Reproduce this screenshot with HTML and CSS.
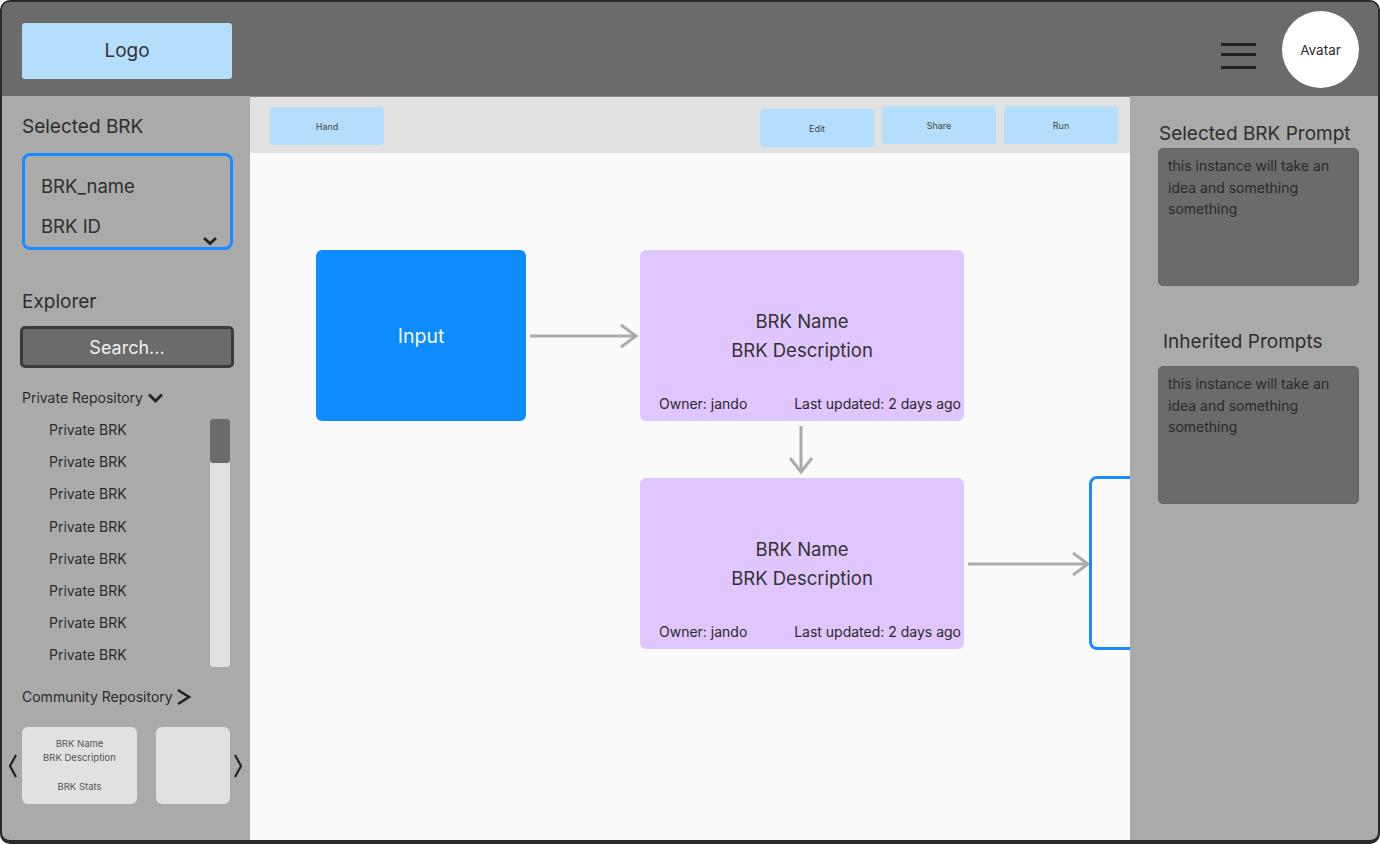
FILE: index.html
```html
<!DOCTYPE html>
<html>
<head>
<meta charset="utf-8">
<link rel="stylesheet" href="styles.css">
</head>
<body>
<div class="frame">
  <header class="header">
    <div class="logo">Logo</div>
    <div class="header-right">
      <svg class="hamburger" width="36" height="32" viewBox="0 0 36 32">
        <rect x="0" y="3" width="35" height="3" fill="#222"/>
        <rect x="0" y="13" width="35" height="3" fill="#222"/>
        <rect x="0" y="26" width="35" height="3" fill="#222"/>
      </svg>
      <div class="avatar">Avatar</div>
    </div>
  </header>
  <div class="main">
    <aside class="sidebar">
      <h2 class="side-title">Selected BRK</h2>
      <div class="select-box">
        <div class="select-line">BRK_name</div>
        <div class="select-line">BRK ID</div>
        <svg class="select-chevron" width="16" height="10" viewBox="0 0 16 10"><path d="M2 2 L8 7.5 L14 2" fill="none" stroke="#222" stroke-width="2.8"/></svg>
      </div>
      <h2 class="side-title explorer">Explorer</h2>
      <div class="search">Search...</div>
      <div class="repo-head">Private Repository
        <svg width="17" height="12" viewBox="0 0 17 12"><path d="M2 2.5 L8.5 9 L15 2.5" fill="none" stroke="#222" stroke-width="2.8"/></svg>
      </div>
      <div class="repo-list">
        <ul class="items">
          <li>Private BRK</li>
          <li>Private BRK</li>
          <li>Private BRK</li>
          <li>Private BRK</li>
          <li>Private BRK</li>
          <li>Private BRK</li>
          <li>Private BRK</li>
          <li>Private BRK</li>
        </ul>
        <div class="scrollbar"><div class="thumb"></div></div>
      </div>
      <div class="repo-head community">Community Repository
        <svg width="16" height="18" viewBox="0 0 16 18"><path d="M2 2 L13 9 L2 16" fill="none" stroke="#222" stroke-width="2.6"/></svg>
      </div>
      <div class="carousel">
        <svg class="car-arrow" width="12" height="26" viewBox="0 0 12 26"><path d="M9 2 L3 13 L9 24" fill="none" stroke="#222" stroke-width="2.2"/></svg>
        <div class="card">
          <div>BRK Name</div>
          <div>BRK Description</div>
          <div class="stats">BRK Stats</div>
        </div>
        <div class="card small"></div>
        <svg class="car-arrow" width="12" height="26" viewBox="0 0 12 26"><path d="M3 2 L9 13 L3 24" fill="none" stroke="#222" stroke-width="2.2"/></svg>
      </div>
    </aside>
    <section class="center">
      <div class="toolbar">
        <button class="tool hand">Hand</button>
        <div class="tool-group">
          <button class="tool edit">Edit</button>
          <button class="tool">Share</button>
          <button class="tool">Run</button>
        </div>
      </div>
      <div class="canvas">
        <svg class="wires" width="880" height="690" viewBox="0 0 880 690">
          <g fill="none" stroke="#ababab" stroke-width="3">
            <path d="M280 183 H385"/>
            <path d="M371 172 L386 183 L371 194"/>
            <path d="M551 273 V318"/>
            <path d="M540 305 L551 319 L562 305"/>
            <path d="M718 411 H837"/>
            <path d="M823 400 L838 411 L823 422"/>
          </g>
        </svg>
        <div class="node input-node">Input</div>
        <div class="node brk n1">
          <div class="brk-title">BRK Name<br>BRK Description</div>
          <div class="brk-foot"><span>Owner: jando</span><span>Last updated: 2 days ago</span></div>
        </div>
        <div class="node brk n2">
          <div class="brk-title">BRK Name<br>BRK Description</div>
          <div class="brk-foot"><span>Owner: jando</span><span>Last updated: 2 days ago</span></div>
        </div>
        <div class="node output-node"></div>
      </div>
    </section>
    <aside class="rightpanel">
      <h2 class="r-title">Selected BRK Prompt</h2>
      <div class="prompt">this instance will take an idea and something something</div>
      <h2 class="r-title inherited">Inherited Prompts</h2>
      <div class="prompt">this instance will take an idea and something something</div>
    </aside>
  </div>
</div>
</body>
</html>
```

FILE: styles.css
```css
* { box-sizing: border-box; }
html, body { margin: 0; padding: 0; }
body {
  width: 1380px;
  height: 844px;
  background: #ffffff;
  font-family: Inter, "Liberation Sans", sans-serif;
  color: #2e2e2e;
  overflow: hidden;
}
.frame {
  width: 1380px;
  height: 844px;
  border: 2px solid #2a2a2a;
  border-bottom-width: 4px;
  border-radius: 10px;
  overflow: hidden;
  display: flex;
  flex-direction: column;
  background: #6b6b6b;
}
.header {
  height: 94px;
  flex: none;
  background: #6b6b6b;
  display: flex;
  align-items: center;
  justify-content: space-between;
  padding: 0 19px 0 20px;
}
.logo {
  width: 210px;
  height: 56px;
  background: #b5defd;
  border-radius: 3px;
  display: flex;
  align-items: center;
  justify-content: center;
  font-size: 19px;
  color: #333;
  margin-top: 3px;
}
.header-right {
  display: flex;
  align-items: center;
  gap: 25px;
}
.hamburger { display: block; margin-top: 14px; }
.avatar {
  width: 77px;
  height: 77px;
  border-radius: 50%;
  background: #fff;
  display: flex;
  align-items: center;
  justify-content: center;
  font-size: 13.5px;
  color: #2a2a2a;
  margin-top: 1px;
}
.main {
  flex: 1;
  display: flex;
  min-height: 0;
}
.sidebar {
  width: 248px;
  flex: none;
  background: #aaaaaa;
  padding: 0 0 0 20px;
  display: flex;
  flex-direction: column;
  border-bottom-left-radius: 8px;
}
.side-title {
  margin: 20px 0 0 0;
  font-size: 19px;
  font-weight: 400;
  line-height: 22px;
  color: #2e2e2e;
}
.select-box {
  position: relative;
  margin-top: 15px;
  width: 211px;
  height: 97px;
  border: 3px solid #1a8cff;
  border-radius: 8px;
  padding: 20px 0 0 16px;
}
.select-line {
  font-size: 18.5px;
  line-height: 20px;
  color: #2e2e2e;
  margin-bottom: 20px;
}
.select-chevron {
  position: absolute;
  right: 12px;
  bottom: 1px;
}
.side-title.explorer { margin-top: 41px; }
.search {
  margin: 13px 0 0 -2px;
  width: 214px;
  height: 42px;
  background: #6b6b6b;
  border: 3px solid #3b3b3b;
  border-radius: 5px;
  color: #f0f0f0;
  font-size: 18px;
  display: flex;
  align-items: center;
  justify-content: center;
}
.repo-head {
  margin-top: 22px;
  font-size: 14px;
  line-height: 16px;
  display: flex;
  align-items: center;
  gap: 4px;
  color: #2a2a2a;
}
.repo-head svg { display: block; }
.repo-list {
  margin-top: 13px;
  display: flex;
  height: 248px;
}
.items {
  list-style: none;
  margin: 0;
  padding: 3px 0 0 27px;
  width: 188px;
}
.items li {
  font-size: 14px;
  line-height: 16px;
  height: 32.2px;
  color: #2a2a2a;
}
.scrollbar {
  width: 20px;
  height: 248px;
  background: #e1e1e1;
  border-radius: 3px;
  position: relative;
}
.thumb {
  width: 20px;
  height: 44px;
  background: #6b6b6b;
  border-radius: 3px;
}
.repo-head.community { margin-top: 21px; gap: 3px; }
.carousel {
  margin: 21px 0 0 -15px;
  display: flex;
  align-items: center;
  gap: 0;
}
.carousel .car-arrow { display: block; }
.card {
  width: 115px;
  height: 77px;
  background: #e1e1e1;
  border-radius: 6px;
  margin-left: 3px;
  font-size: 9.5px;
  line-height: 14px;
  color: #555;
  text-align: center;
  padding-top: 10px;
}
.card .stats { margin-top: 15px; }
.card.small { width: 74px; margin-left: 19px; margin-right: 2px; }
.center {
  flex: 1;
  display: flex;
  flex-direction: column;
  min-width: 0;
}
.toolbar {
  height: 57px;
  flex: none;
  background: #e1e1e1;
  display: flex;
  justify-content: space-between;
  align-items: flex-start;
  padding: 10px 12px 0 20px;
  border-top: 1px solid #8a8a8a;
}
.tool {
  width: 114px;
  height: 38px;
  border: none;
  background: #b5defd;
  border-radius: 3px;
  font-family: Inter, "Liberation Sans", sans-serif;
  font-size: 9px;
  color: #444;
  padding: 0;
}
.tool-group { display: flex; gap: 8px; margin-top: -1px; }
.tool.edit { margin-top: 3px; }
.canvas {
  flex: 1;
  position: relative;
  background: #fafafa;
  overflow: hidden;
}
.wires { position: absolute; left: 0; top: 0; }
.node {
  position: absolute;
  border-radius: 6px;
}
.input-node {
  left: 66px;
  top: 97px;
  width: 210px;
  height: 171px;
  background: #0d8bff;
  color: #f4f8ff;
  font-size: 19.5px;
  display: flex;
  align-items: center;
  justify-content: center;
}
.brk {
  left: 390px;
  width: 324px;
  height: 171px;
  background: #e0c6fe;
  display: flex;
  flex-direction: column;
  padding: 57px 3px 0 19px;
}
.n1 { top: 97px; }
.n2 { top: 325px; }
.brk-title {
  font-size: 18.5px;
  line-height: 29px;
  text-align: center;
  color: #333;
  padding-right: 16px;
}
.brk-foot {
  margin-top: auto;
  margin-bottom: 8px;
  display: flex;
  justify-content: space-between;
  font-size: 14px;
  line-height: 18px;
  color: #2a2a2a;
}
.output-node {
  left: 839px;
  top: 323px;
  width: 80px;
  height: 174px;
  border: 3px solid #1a8cff;
  border-radius: 8px;
  background: #fafafa;
}
.rightpanel {
  width: 248px;
  flex: none;
  background: #aaaaaa;
  padding: 0 0 0 28px;
  border-bottom-right-radius: 8px;
}
.r-title {
  margin: 27px 0 0 1px;
  font-size: 19px;
  font-weight: 400;
  line-height: 22px;
  color: #2e2e2e;
}
.prompt {
  width: 201px;
  height: 138px;
  background: #6b6b6b;
  border: 1px solid #646464;
  border-radius: 5px;
  margin-top: 3px;
  padding: 6px 8px 0 9px;
  font-size: 14px;
  line-height: 21.5px;
  color: #2a2a2a;
}
.r-title.inherited { margin: 45px 0 0 5px; }
.inherited + .prompt { margin-top: 13px; }
```
